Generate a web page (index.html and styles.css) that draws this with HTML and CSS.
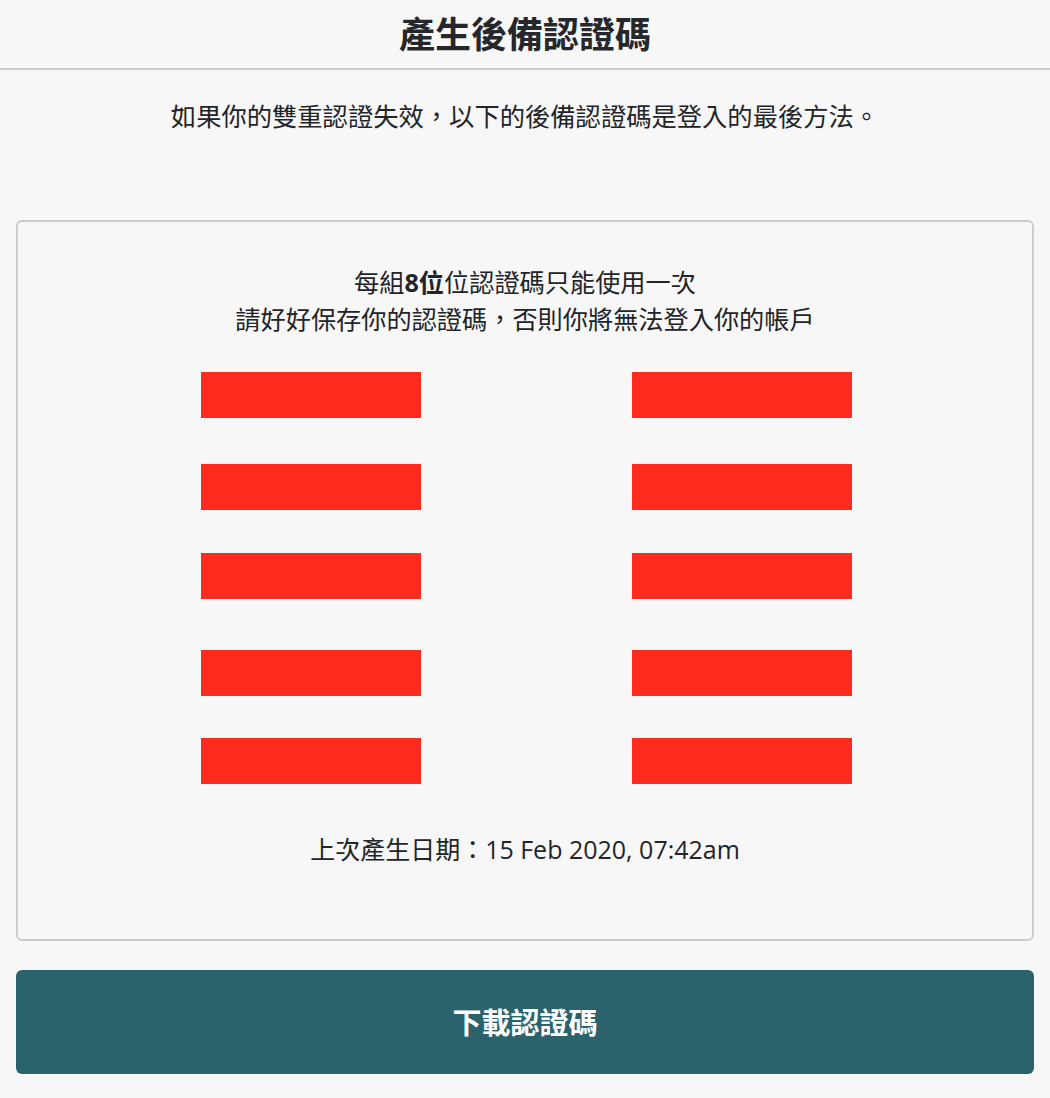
FILE: index.html
```html
<!DOCTYPE html>
<html lang="zh-Hant">
<head>
<meta charset="utf-8">
<title>產生後備認證碼</title>
<link rel="stylesheet" href="styles.css">
</head>
<body>
<header class="page-header">
  <h1 class="page-title">產生後備認證碼</h1>
</header>
<main class="content">
  <p class="intro">如果你的雙重認證失效，以下的後備認證碼是登入的最後方法。</p>
  <section class="card">
    <p class="card-note">每組<strong>8位</strong>位認證碼只能使用一次<br>請好好保存你的認證碼，否則你將無法登入你的帳戶</p>
    <div class="codes">
      <div class="code-row"><span class="code"></span><span class="code"></span></div>
      <div class="code-row"><span class="code"></span><span class="code"></span></div>
      <div class="code-row"><span class="code"></span><span class="code"></span></div>
      <div class="code-row"><span class="code"></span><span class="code"></span></div>
      <div class="code-row"><span class="code"></span><span class="code"></span></div>
    </div>
    <p class="generated">上次產生日期：15 Feb 2020, 07:42am</p>
  </section>
  <button class="download" type="button">下載認證碼</button>
</main>
</body>
</html>
```

FILE: styles.css
```css
* { box-sizing: border-box; }

html, body {
  margin: 0;
  padding: 0;
  background: #f7f7f7;
}

body {
  font-family: "Open Sans", "Noto Sans CJK TC", sans-serif;
  color: #222428;
  width: 1050px;
}

.page-header {
  height: 70px;
  border-bottom: 2px solid #cccccc;
  display: flex;
  align-items: center;
  justify-content: center;
}

.page-title {
  margin: 0;
  font-family: "Noto Sans CJK TC", sans-serif;
  font-size: 36px;
  font-weight: 700;
  line-height: 1;
  color: #25272b;
  padding-bottom: 4px;
}

.content {
  padding: 0 16px;
}

.intro {
  margin: 28px 0 0;
  text-align: center;
  font-size: 25.3px;
  line-height: 37.5px;
}

.card {
  margin-top: 84px;
  border: 2px solid #cccccc;
  border-radius: 6px;
  padding: 42px 0 0;
  height: 721px;
}

.card-note {
  margin: 0;
  text-align: center;
  font-size: 25.2px;
  line-height: 37.5px;
}

.card-note strong {
  font-weight: 700;
}

.codes {
  margin-top: 33px;
  padding-left: 3px;
  display: flex;
  flex-direction: column;
  align-items: center;
}

.code-row {
  display: grid;
  grid-template-columns: 220px 220px;
  column-gap: 211px;
}

.code-row:nth-child(2) { margin-top: 46px; }
.code-row:nth-child(3) { margin-top: 43px; }
.code-row:nth-child(4) { margin-top: 51px; }
.code-row:nth-child(5) { margin-top: 42px; }

.code {
  display: block;
  height: 46px;
  background: #ff2b1f;
}

.generated {
  margin: 47px 0 0;
  text-align: center;
  font-size: 25px;
  line-height: 37.5px;
}

.download {
  display: flex;
  align-items: center;
  justify-content: center;
  width: 100%;
  height: 104px;
  margin-top: 29px;
  border: none;
  border-radius: 6px;
  background: #2b636c;
  color: #ffffff;
  font-family: "Noto Sans CJK TC", sans-serif;
  font-size: 29px;
  font-weight: 700;
  padding: 0 0 2px;
  cursor: pointer;
}
```
